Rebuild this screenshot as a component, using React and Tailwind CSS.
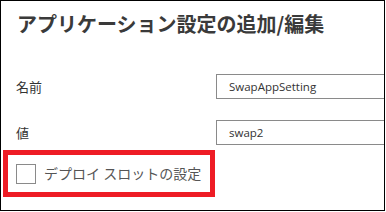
export default function App() {
  const jp = { fontFamily: '"Noto Sans CJK JP", "Noto Sans", sans-serif' };
  const seg = { fontFamily: '"Open Sans", "Noto Sans", sans-serif' };
  return (
    <div className="w-[386px] h-[212px] bg-white">
      <div className="w-[385px] h-[211px] border border-black overflow-hidden bg-white">
        <div className="pl-[16px] pt-[8px]">
          <h1 className="text-[20px] leading-[30px] font-bold text-[#3a3a3a]" style={jp}>
            アプリケーション設定の追加/編集
          </h1>
        </div>
        <div className="mt-[35px] flex items-center h-[25px]">
          <div className="w-[215px] pl-[15px] text-[13px] text-[#333333]" style={jp}>名前</div>
          <div className="flex-1 h-[25px] border border-[#8a8a8a] border-r-0 flex items-center pl-[12px] text-[11.5px] text-[#333333]" style={seg}>
            SwapAppSetting
          </div>
        </div>
        <div className="mt-[21px] flex items-center h-[25px]">
          <div className="w-[215px] pl-[15px] text-[13px] text-[#333333]" style={jp}>値</div>
          <div className="flex-1 h-[25px] border border-[#8a8a8a] border-r-0 flex items-center pl-[12px] text-[11.5px] text-[#333333]" style={seg}>
            swap2
          </div>
        </div>
        <div className="mt-[5px] ml-[2px] w-[212px] h-[47px] border-[5px] border-[#ee1c25] flex items-center pl-[8px]">
          <div className="w-[20px] h-[20px] border border-[#8a8a8a] bg-white shrink-0"></div>
          <span className="ml-[8px] text-[14px] text-[#555555] whitespace-nowrap" style={jp}>デプロイ スロットの設定</span>
        </div>
      </div>
    </div>
  );
}
